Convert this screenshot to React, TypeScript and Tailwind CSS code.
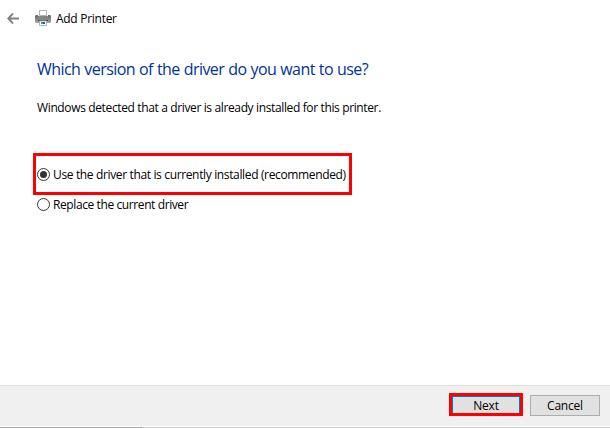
import React from "react";

function Radio({ checked, label, spacing }: { checked?: boolean; label: string; spacing: string }) {
  return (
    <label className="flex items-center">
      <svg width="13" height="13" viewBox="0 0 13 13" className="shrink-0">
        <circle cx="6.5" cy="6.5" r="6" fill="#fff" stroke="#333" />
        {checked && <circle cx="6.5" cy="6.5" r="3.5" fill="#333" />}
      </svg>
      <span className={`ml-[3px] pt-0.5 leading-4 whitespace-nowrap ${spacing}`}>{label}</span>
    </label>
  );
}

export default function App() {
  return (
    <div className="flex h-[428px] w-[610px] flex-col overflow-hidden bg-white font-['Open_Sans','Noto_Sans',sans-serif] text-xs text-black">
      {/* Title bar */}
      <header className="flex h-9 items-center pl-[7px]">
        <svg width="12" height="11" viewBox="0 0 12 11" fill="none" stroke="#808080" strokeWidth="1.9">
          <path d="M12 5.5H1.5M6 .5L1.2 5.5L6 10.5" />
        </svg>
        <svg width="16" height="16" viewBox="0 0 16 16" className="ml-4">
          <defs>
            <linearGradient id="body" x1="0" y1="0" x2="0" y2="1">
              <stop offset="0" stopColor="#666" />
              <stop offset="1" stopColor="#a6a6a6" />
            </linearGradient>
          </defs>
          <path d="M4.5 .5h7v5h-7z" fill="#fff" stroke="#b0b4b8" />
          <path d="M1 5h2v2h10V5h2l1 1v6l-1 1H1l-1-1V6z" fill="url(#body)" />
          <rect x="3" y="6" width="10" height="4" fill="#858585" />
          <rect x="3" y="10" width="10" height="1" fill="#444" />
          <path d="M4.5 11h7v4.5h-7z" fill="#fff" stroke="#b0b4b8" />
          <rect x="6" y="12" width="2" height="2" fill="#3c9c9c" />
          <rect x="8" y="12" width="2" height="2" fill="#1260ac" />
        </svg>
        <span className="mt-0.5 ml-[5px] leading-4 tracking-[-0.28px]">Add Printer</span>
      </header>

      <main className="flex h-[349px] flex-col pl-[37px]">
        <h1 className="mt-[22px] text-base leading-[22px] tracking-[-0.55px] [word-spacing:0.35px] whitespace-nowrap text-[#003399]">
          Which version of the driver do you want to use?
        </h1>
        <p className="mt-5 leading-4 tracking-[-0.365px] whitespace-nowrap">
          Windows detected that a driver is already installed for this printer.
        </p>
        <div className="mt-[37px] -ml-1 flex h-[42px] w-[319px] items-center border-3 border-[#ff0000] pl-px">
          <Radio checked label="Use the driver that is currently installed (recommended)" spacing="tracking-[-0.355px]" />
        </div>
        <Radio label="Replace the current driver" spacing="tracking-[-0.4px]" />
      </main>

      {/* Footer */}
      <footer className="flex h-[41px] items-start justify-end gap-[7px] border-t border-[#dfdfdf] bg-[#f0f0f0] pt-[7px] pr-2.5">
        <button className="h-[23px] w-[74px] border-3 border-[#ff0000] bg-[#e1e1e1]">
          <span className="flex h-full items-center justify-center border-x border-t border-[#0078d7] pt-0.5 tracking-[-0.2px]">
            Next
          </span>
        </button>
        <button className="mt-0.5 h-[21px] w-[70px] border border-[#adadad] bg-[#e1e1e1] tracking-[-0.2px]">
          Cancel
        </button>
      </footer>
      <div className="mt-px flex h-px bg-[#c8c8c8]">
        <div className="w-[142px] bg-[#a8a8a8]" />
      </div>
    </div>
  );
}
